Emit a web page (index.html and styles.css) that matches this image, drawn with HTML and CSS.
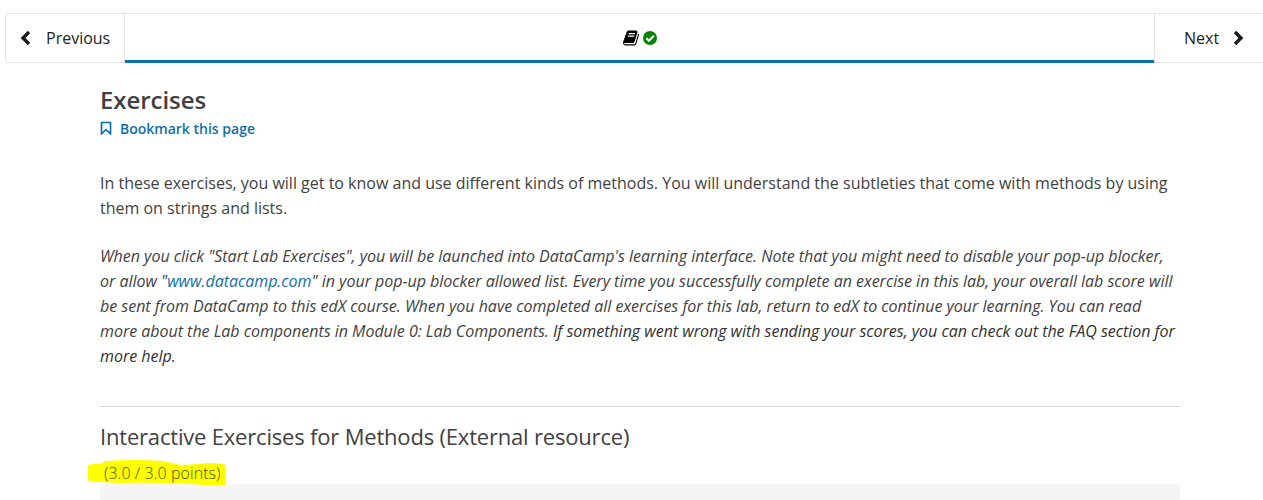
FILE: index.html
```html
<!DOCTYPE html>
<html lang="en">
<head>
<meta charset="utf-8">
<title>Exercises</title>
<link rel="stylesheet" href="styles.css">
</head>
<body>
<nav class="sequence-nav">
  <a class="nav-button previous">
    <svg class="chevron" viewBox="0 0 12 16"><path d="M10 2 4 8l6 6" /></svg>
    <span>Previous</span>
  </a>
  <div class="sequence-tab">
    <svg class="book" viewBox="0 0 1664 1536"><path d="M1639 350q40 57 18 129l-275 906q-19 64-76.500 107.500t-122.500 43.500h-923q-77 0-148.500-53.500t-99.500-131.500q-24-67-2-127 0-4 3-27t4-37q1-8-3-21.500t-3-19.500q2-11 8-21t16.500-23.500 16.500-23.500q23-38 45-91.500t30-91.500q3-10 .5-30t-.5-28q3-11 17-28t17-23q21-36 42-92t25-90q1-9-2.500-32t.5-28q4-13 22-30.500t22-22.500q19-26 42.500-84.500t27.500-96.500q1-8-3-25.500t-2-26.500q2-8 9-18t18-23 17-21q8-12 16.500-30.500t15-35 16-36 19.500-32 26.500-23.500 36-11.500 47.500 5.500l-1 3q38-9 51-9h761q74 0 114 56t18 130l-274 906q-36 119-71.500 153.500t-128.500 34.500h-869q-27 0-38 15-11 16-1 43 24 70 144 70h923q29 0 56-15.500t35-41.500l300-987q7-22 5-57 38 15 59 43zm-1064 2q-4 13 2 22.500t20 9.500h608q13 0 25.500-9.500t16.500-22.500l21-64q4-13-2-22.500t-20-9.500h-608q-13 0-25.500 9.500t-16.500 22.500zm-83 256q-4 13 2 22.500t20 9.500h608q13 0 25.500-9.500t16.500-22.500l21-64q4-13-2-22.500t-20-9.500h-608q-13 0-25.500 9.500t-16.500 22.500z" /></svg>
    <svg class="check" viewBox="0 0 14 14"><circle cx="7" cy="7" r="7" /><path d="m3.300 7.200 2.600 2.600 5-5" /></svg>
  </div>
  <a class="nav-button next">
    <span>Next</span>
    <svg class="chevron" viewBox="0 0 12 16"><path d="m2 2 6 6-6 6" /></svg>
  </a>
</nav>
<main class="content">
  <h1 class="unit-title">Exercises</h1>
  <a class="bookmark">
    <svg class="bookmark-icon" viewBox="0 0 12 14"><path d="M1.500 1.500h9v11.300L6 8.700l-4.500 4.100z" /></svg>
    <span>Bookmark this page</span>
  </a>
  <p class="intro">In these exercises, you will get to know and use different kinds of methods. You will understand the subtleties that come with methods by using<br>them on strings and lists.</p>
  <p class="instructions">When you click "Start Lab Exercises", you will be launched into DataCamp's learning interface. Note that you might need to disable your pop-up blocker,<br>or allow "<a class="link">www.datacamp.com</a>" in your pop-up blocker allowed list. Every time you successfully complete an exercise in this lab, your overall lab score will<br>be sent from DataCamp to this edX course. When you have completed all exercises for this lab, return to edX to continue your learning. You can read<br>more about the Lab components in Module 0: Lab Components. <span class="emphasis">If something went wrong with sending your scores, you can check out the FAQ section for<br>more help.</span></p>
  <section class="resource">
    <h2 class="resource-title">Interactive Exercises for Methods (External resource)</h2>
    <div class="score">
      <svg class="marker" viewBox="0 0 138 26"><path d="M0 5Q7 3 13 4L17 1Q48-1 75 1L93 5 112 4Q122 2 136 4L138 7V25Q120 26 103 24 60 22 31 23L12 22Q4 23 0 20z" /></svg>
      <span class="score-text">(3.0 / 3.0 points)</span>
    </div>
    <div class="launch-panel"></div>
  </section>
</main>
</body>
</html>
```
FILE: styles.css
```css
* { box-sizing: border-box; }
body {
  margin: 0;
  height: 500px;
  overflow: hidden;
  background: #fff;
  color: #414141;
  font-family: "Open Sans", sans-serif;
}
.sequence-nav {
  display: flex;
  height: 50px;
  margin: 13px 0 0 5px;
  border: 1px solid #e3e3e3;
  border-right: 0;
  border-radius: 3px 0 0 3px;
}
.nav-button {
  display: flex;
  align-items: center;
  color: #222;
  font-size: 16px;
}
.previous { width: 119px; padding-left: 13px; gap: 15px; border-right: 1px solid #e3e3e3; }
.next { width: 109px; padding-left: 29px; gap: 14px; border-left: 1px solid #e3e3e3; }
.chevron { width: 12px; height: 16px; fill: none; stroke: #1b1b1b; stroke-width: 3.4; }
.sequence-tab {
  display: flex;
  flex: 1;
  align-items: center;
  justify-content: center;
  gap: 4px;
  height: 49px;
  padding-top: 1px;
  border-bottom: 3px solid #0b71a8;
}
.book { width: 16px; height: 16px; fill: #000; }
.check { width: 14px; height: 14px; fill: #008100; }
.check path { fill: none; stroke: #fff; stroke-width: 2.2; }
.content { width: 1080px; margin-left: 100px; white-space: nowrap; }
.unit-title { margin: 20px 0 0; font-size: 24px; line-height: 34px; font-weight: 600; letter-spacing: -0.05px; }
.bookmark {
  display: flex;
  align-items: center;
  gap: 8px;
  height: 22px;
  color: #0d70a9;
  font-size: 14px;
  font-weight: 600;
}
.bookmark-icon { width: 12px; height: 14px; fill: none; stroke: #0d70a9; stroke-width: 1.700; }
.intro, .instructions { margin: 0; font-size: 16px; line-height: 25px; }
.intro { margin-top: 32px; }
.instructions { margin-top: 23px; font-style: italic; letter-spacing: -0.02px; }
.link { color: #126fa8; }
.emphasis { color: #303030; }
.resource { margin-top: 37px; border-top: 1px solid #d8d8d8; }
.resource-title { margin: 13px 0 0; font-size: 22px; line-height: 32px; font-weight: 400; letter-spacing: -0.19px; }
.score { position: relative; height: 32px; padding: 10px 0 0 4px; }
.marker { position: absolute; left: -12px; top: 8px; width: 138px; height: 26px; fill: #ff0; }
.score-text { position: relative; display: block; color: #4e4e08; font-size: 16px; line-height: 22px; font-weight: 300; letter-spacing: 0.05px; }
.launch-panel { height: 40px; background: #f5f5f5; }
```
